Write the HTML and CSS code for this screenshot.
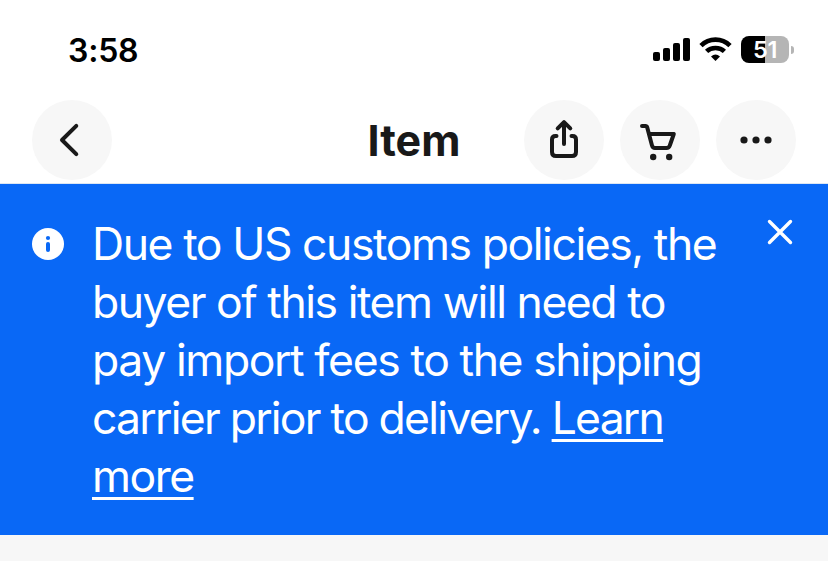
FILE: index.html
```html
<!DOCTYPE html>
<html lang="en">
<head>
<meta charset="utf-8">
<title>Item</title>
<link rel="stylesheet" href="styles.css">
</head>
<body>
<div class="status">
  <span class="time">3:58</span>
  <div class="indicators">
    <svg width="37" height="24" viewBox="0 0 37 24"><rect x="0" y="15" width="7" height="9" rx="2"/><rect x="10" y="11" width="7" height="13" rx="2"/><rect x="20" y="6" width="7" height="18" rx="2"/><rect x="30" y="1" width="7" height="23" rx="2"/></svg>
    <svg class="wifi" width="33" height="24" viewBox="0 0 33 24"><g fill="none" stroke="#000" stroke-width="4.6"><path d="M2 8.6Q8 2.6 16.5 2.6T31 8.6"/><path d="M7.6 14.3Q11 11 16.5 11T25.4 14.3"/></g><path d="M12 19.4Q16.5 15.8 21 19.4L16.5 24Z"/></svg>
    <div class="battery"><span>51</span></div>
    <span class="battery-tip"></span>
  </div>
</div>
<header class="bar">
  <button class="round" aria-label="Back"><svg width="80" height="80" viewBox="0 0 80 80"><path d="M44.3 25.8L30 40L44.3 54.2"/></svg></button>
  <h1>Item</h1>
  <div class="actions">
    <button class="round" aria-label="Share"><svg width="80" height="80" viewBox="0 0 80 80"><path d="M40 44V22.5M33.7 28.4L40 22.1L46.3 28.4M32.5 36H31.5Q28 36 28 39.5V52Q28 56 32 56H48Q52 56 52 52V39.5Q52 36 48.5 36H47.5"/></svg></button>
    <button class="round" aria-label="Cart"><svg width="80" height="80" viewBox="0 0 80 80"><path d="M22 26H25.4Q26.8 26 27.2 27.4L32 45.5Q32.7 48 35 48H46.5Q49 48 49.8 45.5L53.8 34H29"/><circle class="dot" cx="33.2" cy="57" r="3.2"/><circle class="dot" cx="49.2" cy="57" r="3.2"/></svg></button>
    <button class="round" aria-label="More"><svg width="80" height="80" viewBox="0 0 80 80"><circle class="dot" cx="28" cy="40" r="3.6"/><circle class="dot" cx="40" cy="40" r="3.6"/><circle class="dot" cx="52" cy="40" r="3.6"/></svg></button>
  </div>
</header>
<section class="notice">
  <svg class="info" width="32" height="32" viewBox="0 0 32 32"><circle cx="16" cy="16" r="16" fill="#fff"/><circle cx="16" cy="10" r="2.1" fill="#0968f6"/><path d="M16 16V22" stroke="#0968f6" stroke-width="4" stroke-linecap="round"/></svg>
  <p class="message">
    <span class="line l1">Due to US customs policies, the</span>
    <span class="line l2">buyer of this item will need to</span>
    <span class="line l3">pay import fees to the shipping</span>
    <span class="line l4">carrier prior to delivery. <a>Learn</a></span>
    <span class="line l5"><a>more</a></span>
  </p>
  <svg class="close" width="26" height="26" viewBox="0 0 26 26"><path d="M2.5 2.5L23.5 23.5M23.5 2.5L2.5 23.5" stroke="#fff" stroke-width="3.4" stroke-linecap="round"/></svg>
</section>
</body>
</html>
```

FILE: styles.css
```css
* { box-sizing: border-box; }
body { margin: 0; height: 561px; overflow: hidden; background: #f7f7f7; font-family: Inter, "Noto Sans", sans-serif; }
.status { height: 100px; padding: 0 34px 0 68px; background: #fff; display: flex; justify-content: space-between; }
.time { margin-top: 31px; height: 40px; font-size: 32px; line-height: 40px; font-weight: 600; color: #000; letter-spacing: -0.2px; }
.indicators { display: flex; align-items: flex-start; padding-top: 37px; }
.wifi { margin-left: 9px; }
.battery { width: 48px; height: 27px; margin: -1px 0 0 9px; border-radius: 8px; background: linear-gradient(90deg, #000 50%, #b5b5b5 50%); color: #fff; font-size: 23.5px; line-height: 28px; font-weight: 600; text-align: center; letter-spacing: -0.3px; }
.battery-tip { width: 3px; height: 8px; margin: 9px 0 0 2px; border-radius: 0 4px 4px 0; background: #b5b5b5; }
.bar { height: 84px; padding: 0 32px; background: #fff; border-bottom: 1px solid #dce6f3; display: grid; grid-template-columns: 272px 1fr 272px; align-items: start; }
.bar h1 { margin: 0; font-size: 43px; line-height: 80px; font-weight: 700; text-align: center; color: #191919; letter-spacing: 0; white-space: nowrap; justify-self: center; }
.actions { display: flex; gap: 16px; }
.round { width: 80px; height: 80px; padding: 0; border: 0; border-radius: 50%; background: #f7f7f7; }
.round svg { display: block; fill: none; stroke: #191919; stroke-width: 4; stroke-linecap: round; stroke-linejoin: round; }
.round .dot { fill: #191919; stroke: none; }
.notice { height: 351px; padding: 0 35px 0 32px; background: #0968f6; display: flex; color: #fff; }
.info { flex: none; margin-top: 44px; }
.message { flex: 1; margin: 31px 0 0 28px; font-size: 44.5px; line-height: 58px; font-weight: 400; }
.line { display: block; white-space: nowrap; }
.line a { text-decoration: underline; text-decoration-thickness: 3px; text-underline-offset: 5px; text-decoration-skip-ink: none; }
.l1 { letter-spacing: -1.43px; }
.l2 { letter-spacing: -1.47px; }
.l3 { letter-spacing: -1.4px; }
.l4 { letter-spacing: -1.76px; }
.l5 { letter-spacing: -1.5px; }
.close { flex: none; margin-top: 35px; }
```
